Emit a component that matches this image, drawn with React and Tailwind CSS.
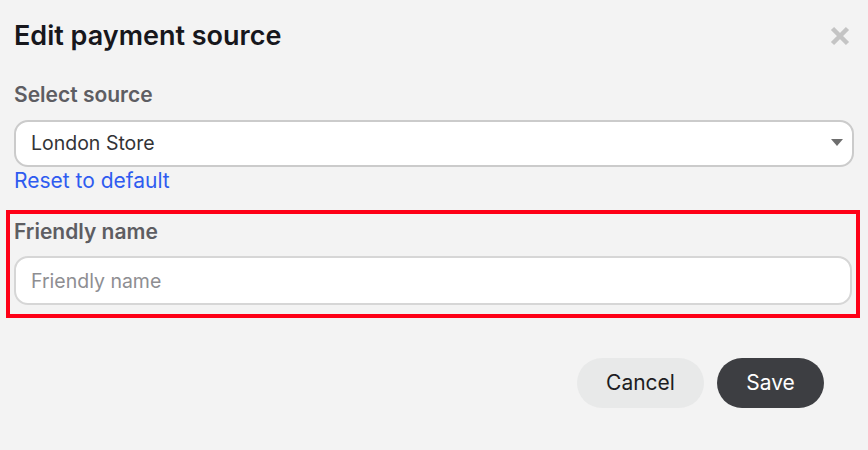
const EditPaymentSource = () => {
  return (
    <div className="min-h-screen w-full bg-[#f3f3f3] font-['Inter',sans-serif]">
      <div className="px-[14px] pt-[20px]">
        <div className="flex items-center justify-between">
          <h2 className="text-[27px] leading-[32px] font-semibold text-[#17171c]">
            Edit payment source
          </h2>
          <button className="mr-[4px]">
            <svg width="20" height="20" viewBox="0 0 20 20" className="text-[#c4c4c4]">
              <path d="M2.5 2.5L17.5 17.5M17.5 2.5L2.5 17.5" stroke="currentColor" strokeWidth="4.5" />
            </svg>
          </button>
        </div>

        <div className="mt-[31px]">
          <label className="block text-[21px] leading-[24px] font-semibold text-[#5d5d62]">
            Select source
          </label>
          <div className="relative mt-[13px]">
            <select className="h-[47px] w-full appearance-none rounded-[14px] border-2 border-[#cbcbcb] bg-white pl-[15px] text-[19.5px] text-[#333336] outline-none">
              <option>London Store</option>
            </select>
            <span className="pointer-events-none absolute right-[11px] top-[19px] border-x-[6px] border-t-[7px] border-x-transparent border-t-[#6e6e6e]" />
          </div>
          <a href="#" className="mt-[1px] block text-[21px] leading-[26px] text-[#2e5bf0]">
            Reset to default
          </a>
        </div>
      </div>

      <div className="ml-[6px] mr-[8px] mt-[16px] border-4 border-[#fe0016] px-[4px] pt-[5px] pb-[9px]">
        <label className="block text-[21px] leading-[26px] font-semibold text-[#5d5d62]">
          Friendly name
        </label>
        <input
          placeholder="Friendly name"
          className="mt-[11px] h-[49px] w-full rounded-[14px] border-2 border-[#d6d6d6] bg-white px-[15px] text-[19.5px] text-[#333336] placeholder-[#8e8e92] outline-none"
        />
      </div>

      <div className="mt-[40px] flex justify-end gap-[13px] pr-[44px]">
        <button className="h-[50px] w-[127px] rounded-full bg-[#e8e9e9] text-[21px] text-[#1d1d22]">
          Cancel
        </button>
        <button className="h-[50px] w-[107px] rounded-full bg-[#3d3e42] text-[21px] text-white">
          Save
        </button>
      </div>
    </div>
  );
};

export default function App() {
  return <EditPaymentSource />;
}
